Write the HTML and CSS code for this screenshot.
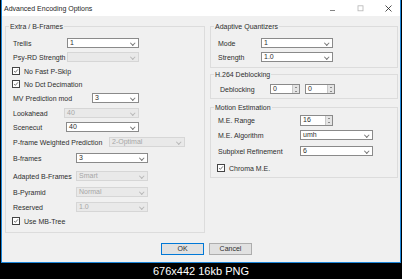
FILE: index.html
```html
<!DOCTYPE html>
<html lang="en">
<head>
  <meta charset="UTF-8" />
  <meta name="viewport" content="width=device-width, initial-scale=1" />
  <title>Advanced Encoding Options</title>
  <link rel="stylesheet" href="styles.css">
</head>
<body>
  <div class="window">
    <!-- Title bar -->
    <div class="titlebar">
      <span class="title">Advanced Encoding Options</span>
      <div class="caption-buttons">
        <svg class="cap" viewBox="0 0 7 7"><path d="M1 5.5 H6" stroke="#666" stroke-width="0.8"/></svg>
        <svg class="cap" viewBox="0 0 7 7"><rect x="1" y="0.8" width="5" height="5" fill="none" stroke="#b5b5b5" stroke-width="0.8"/></svg>
        <svg class="cap" viewBox="0 0 7 7"><path d="M0.5 0.5 L6.5 6.5 M6.5 0.5 L0.5 6.5" stroke="#222" stroke-width="0.8"/></svg>
      </div>
    </div>

    <div class="client">
      <div class="groups">
        <!-- Left group -->
        <fieldset class="group group-left">
          <legend>Extra / B-Frames</legend>
          <div class="row"><span class="lbl lw-54">Trellis</span><div class="combo cw-72"><span>1</span></div></div>
          <div class="row"><span class="lbl lw-54">Psy-RD Strength</span><div class="combo cw-72 disabled"></div></div>
          <div class="row check-row"><span class="check"><svg viewBox="0 0 8 8"><path d="M1.5 4 L3.2 5.8 L6.6 1.8" fill="none" stroke="#333" stroke-width="0.9"/></svg></span><span>No Fast P-Skip</span></div>
          <div class="row check-row sp-3"><span class="check"><svg viewBox="0 0 8 8"><path d="M1.5 4 L3.2 5.8 L6.6 1.8" fill="none" stroke="#333" stroke-width="0.9"/></svg></span><span>No Dct Decimation</span></div>
          <div class="row"><span class="lbl lw-79">MV Prediction mod</span><div class="combo cw-47"><span>3</span></div></div>
          <div class="row sp-5"><span class="lbl lw-51">Lookahead</span><div class="combo cw-75 disabled"><span>40</span></div></div>
          <div class="row"><span class="lbl lw-53">Scenecut</span><div class="combo cw-73"><span>40</span></div></div>
          <div class="row sp-5"><span class="lbl lw-96">P-frame Weighted Prediction</span><div class="combo cw-76 disabled"><span>2-Optimal</span></div></div>
          <div class="row sp-6"><span class="lbl lw-63">B-frames</span><div class="combo cw-72"><span>3</span></div></div>
          <div class="row sp-8"><span class="lbl lw-63">Adapted B-Frames</span><div class="combo cw-72 disabled"><span>Smart</span></div></div>
          <div class="row sp-6"><span class="lbl lw-63">B-Pyramid</span><div class="combo cw-72 disabled"><span>Normal</span></div></div>
          <div class="row sp-5"><span class="lbl lw-63">Reserved</span><div class="combo cw-72 disabled"><span>1.0</span></div></div>
          <div class="row check-row"><span class="check"><svg viewBox="0 0 8 8"><path d="M1.5 4 L3.2 5.8 L6.6 1.8" fill="none" stroke="#333" stroke-width="0.9"/></svg></span><span>Use MB-Tree</span></div>
        </fieldset>

        <!-- Right column -->
        <div class="right-col">
          <fieldset class="group group-aq">
            <legend>Adaptive Quantizers</legend>
            <div class="row"><span class="lbl lw-43">Mode</span><div class="combo cw-72"><span>1</span></div></div>
            <div class="row"><span class="lbl lw-43">Strength</span><div class="combo cw-72"><span>1.0</span></div></div>
          </fieldset>

          <fieldset class="group group-db">
            <legend>H.264 Deblocking</legend>
            <div class="row deblock-row">
              <span class="lbl lw-52">Deblocking</span>
              <div class="spin sw-30"><span class="spin-val">0</span><span class="spin-btns"><i class="up"></i><i class="down"></i></span></div>
              <div class="spin sw-30"><span class="spin-val">0</span><span class="spin-btns"><i class="up"></i><i class="down"></i></span></div>
            </div>
          </fieldset>

          <fieldset class="group group-me">
            <legend>Motion Estimation</legend>
            <div class="row tall"><span class="lbl lw-82">M.E. Range</span><div class="spin sw-33"><span class="spin-val">16</span><span class="spin-btns"><i class="up"></i><i class="down"></i></span></div></div>
            <div class="row"><span class="lbl lw-82">M.E. Algorithm</span><div class="combo cw-73"><span>umh</span></div></div>
            <div class="row sp-6"><span class="lbl lw-82">Subpixel Refinement</span><div class="combo cw-73"><span>6</span></div></div>
            <div class="row check-row sp-7"><span class="check"><svg viewBox="0 0 8 8"><path d="M1.5 4 L3.2 5.8 L6.6 1.8" fill="none" stroke="#333" stroke-width="0.9"/></svg></span><span>Chroma M.E.</span></div>
          </fieldset>
        </div>
      </div>

      <div class="buttons">
        <button class="btn btn-default">OK</button>
        <button class="btn">Cancel</button>
      </div>
    </div>
  </div>

  <div class="caption">676x442 16kb PNG</div>
</body>
</html>
```

FILE: styles.css
```css
* {
  box-sizing: border-box;
}

html, body {
  margin: 0;
  background: #000;
  font-family: 'Liberation Sans', Arial, sans-serif;
}

body {
  width: 402px;
  height: 279px;
  overflow: hidden;
}

.window {
  margin-left: 1px;
  width: 400px;
  height: 263px;
  border: 1px solid #1c86d9;
  border-top: none;
  display: flex;
  flex-direction: column;
  background: #f0f0f0;
}

/* Title bar */
.titlebar {
  height: 16px;
  flex: none;
  background: #fff;
  display: flex;
  align-items: center;
  padding-left: 2px;
  font-size: 7px;
  color: #262626;
}

.title {
  flex: 1;
}

.caption-buttons {
  display: flex;
  align-items: center;
  gap: 21px;
  padding-right: 8px;
}

.cap {
  width: 7px;
  height: 7px;
  display: block;
}

/* Client area */
.client {
  flex: 1;
  padding: 6px 0 0 3px;
  font-size: 7px;
  color: #2e2e2e;
}

.groups {
  display: flex;
  gap: 5px;
  align-items: flex-start;
}

.group {
  margin: 0;
  padding: 7px 0 6px 7px;
  border: 1px solid #dcdcdc;
  min-inline-size: 0;
  display: flex;
  flex-direction: column;
  gap: 4px;
}

.group legend {
  font-size: 7px;
  line-height: 9px;
  padding: 0 1px;
  margin-left: -4px;
  color: #2e2e2e;
}

.group-left {
  width: 200px;
}

.right-col {
  width: 188px;
  display: flex;
  flex-direction: column;
}

.group-aq {
  padding-bottom: 5px;
}

.group-db {
  margin-top: 2px;
  padding-top: 5px;
  padding-bottom: 4px;
}

.group-me {
  margin-top: 4px;
  padding-top: 3px;
  padding-bottom: 4px;
}

.row {
  display: flex;
  align-items: center;
  height: 10px;
  line-height: 9px;
  white-space: nowrap;
}

.row.tall {
  height: 11px;
}

.sp-3 { margin-top: -1px; }
.sp-5 { margin-top: 1px; }
.sp-6 { margin-top: 2px; }
.sp-7 { margin-top: 3px; }
.sp-8 { margin-top: 4px; }

.lbl {
  flex: none;
}

.lw-43 { width: 43px; }
.lw-51 { width: 51px; }
.lw-52 { width: 50px; margin-left: 2px; }
.lw-53 { width: 53px; }
.lw-54 { width: 54px; }
.lw-63 { width: 63px; }
.lw-79 { width: 79px; }
.lw-82 { width: 82px; }
.lw-96 { width: 96px; }

/* Combo boxes */
.combo {
  position: relative;
  height: 10px;
  border: 1px solid #8a8a8a;
  background: #fff;
  padding-left: 2px;
  line-height: 8px;
  flex: none;
}

.combo::after {
  content: '';
  position: absolute;
  right: 4px;
  top: 1.5px;
  width: 2.5px;
  height: 2.5px;
  border-right: 0.8px solid #777;
  border-bottom: 0.8px solid #777;
  transform: rotate(45deg);
}

.combo.disabled {
  background: #e9e9e9;
  border-color: #d6d6d6;
  color: #a6a6a6;
}

.combo.disabled::after {
  border-color: #b8b8b8;
}

.cw-47 { width: 47px; }
.cw-72 { width: 72px; }
.cw-73 { width: 73px; }
.cw-75 { width: 75px; }
.cw-76 { width: 76px; }

/* Spin boxes */
.spin {
  display: flex;
  height: 10px;
  border: 1px solid #8a8a8a;
  background: #fff;
  flex: none;
}

.row.tall .spin {
  height: 11px;
}

.deblock-row .spin + .spin {
  margin-left: 5px;
}

.spin-val {
  flex: 1;
  padding-left: 2px;
  line-height: 8px;
}

.spin-btns {
  width: 7px;
  display: flex;
  flex-direction: column;
  background: #e4e4e4;
  border-left: 1px solid #c8c8c8;
}

.spin-btns i {
  flex: 1;
  display: flex;
  align-items: center;
  justify-content: center;
}

.spin-btns i::before {
  content: '';
  border-left: 1.5px solid transparent;
  border-right: 1.5px solid transparent;
}

.spin-btns .up::before {
  border-bottom: 1.5px solid #333;
}

.spin-btns .down::before {
  border-top: 1.5px solid #333;
}

.sw-30 { width: 30px; }
.sw-33 { width: 33px; }

/* Check boxes */
.check-row {
  margin-left: -1px;
}

.check {
  width: 8px;
  height: 8px;
  border: 1px solid #444;
  background: #fff;
  margin-right: 4px;
  display: flex;
}

.check svg {
  width: 6px;
  height: 6px;
  display: block;
}

/* Buttons */
.buttons {
  display: flex;
  gap: 5px;
  margin-top: 10px;
  padding-left: 156px;
}

.btn {
  width: 43px;
  height: 12px;
  padding: 0;
  font-family: inherit;
  font-size: 7px;
  line-height: 10px;
  color: #2e2e2e;
  background: #e1e1e1;
  border: 1px solid #adadad;
}

.btn-default {
  border-color: #0078d7;
}

/* Image caption */
.caption {
  height: 16px;
  line-height: 16px;
  text-align: center;
  color: #fff;
  font-size: 11px;
}
```
